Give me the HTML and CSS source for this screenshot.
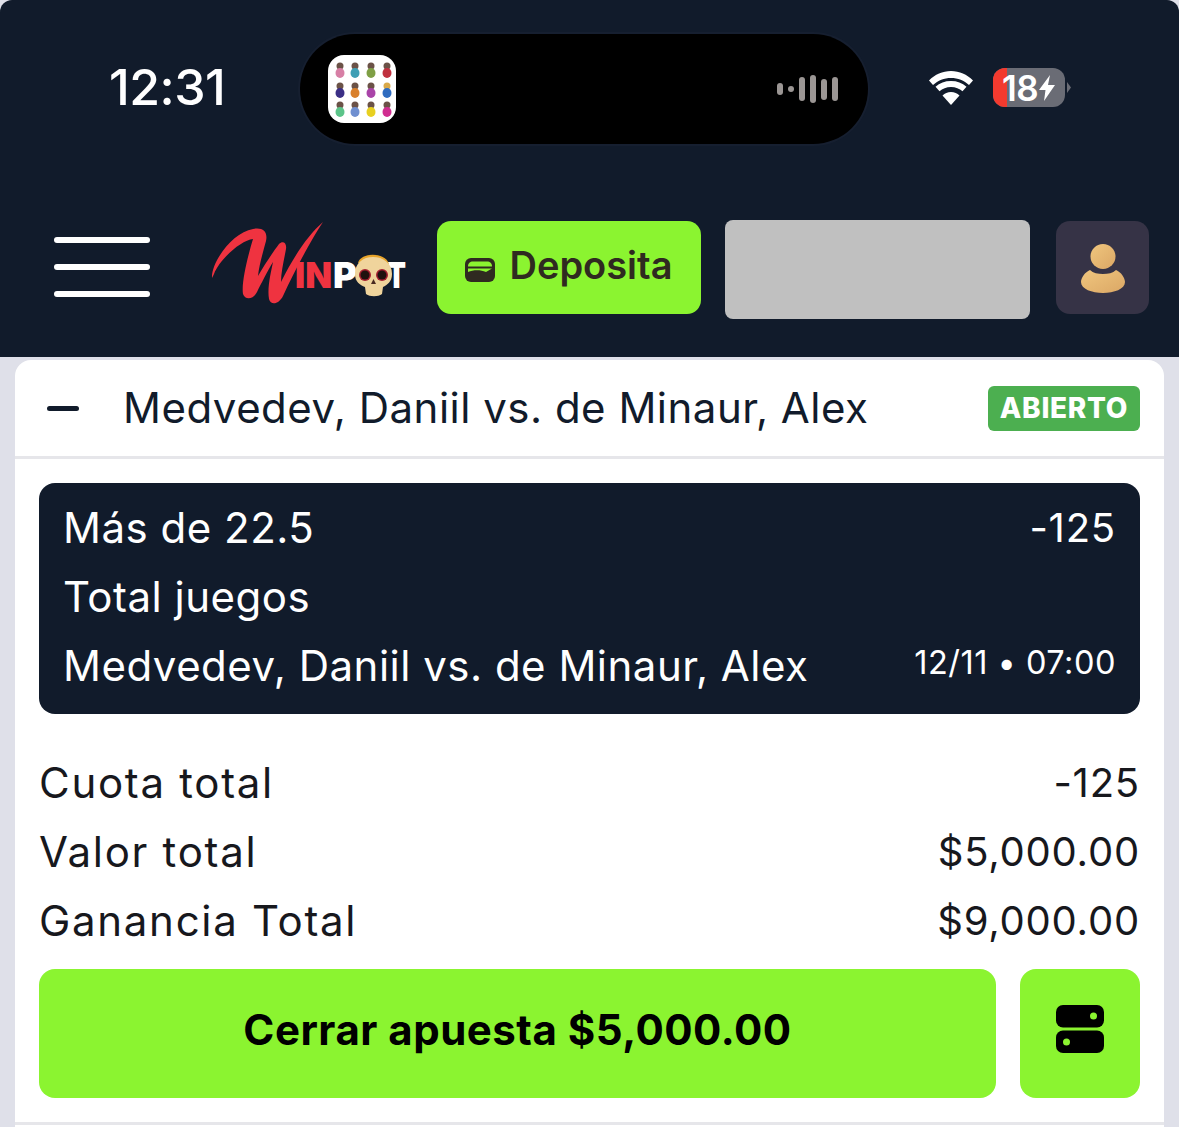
FILE: index.html
```html
<!DOCTYPE html>
<html lang="es">
<head>
  <meta charset="UTF-8">
  <meta name="viewport" content="width=device-width, initial-scale=1">
  <title>Winpot | Mis apuestas</title>
  <link rel="stylesheet" href="styles.css">
</head>

<body>

<div class="top">
  <!-- iOS status bar -->
  <div class="status">
    <span class="time">12:31</span>
    <div class="island">
      <svg class="app-icon" viewBox="0 0 68 68">
        <rect width="68" height="68" rx="16" fill="#fff"/>
        <g fill="#6b5247">
          <circle cx="12" cy="11" r="3.500"/><circle cx="27" cy="11" r="3.500"/><circle cx="43" cy="11" r="3.500"/><circle cx="59" cy="11" r="3.500"/>
          <circle cx="12" cy="31" r="3.500"/><circle cx="27" cy="31" r="3.500"/><circle cx="43" cy="31" r="3.500"/><circle cx="59" cy="31" r="3.500" fill="#d9a94a"/>
          <circle cx="12" cy="50" r="3.500"/><circle cx="27" cy="50" r="3.500"/><circle cx="43" cy="50" r="3.500"/><circle cx="59" cy="50" r="3.500"/>
        </g>
        <ellipse cx="12" cy="18" rx="4.500" ry="5" fill="#d77fa5"/><ellipse cx="27" cy="18" rx="4.500" ry="5" fill="#3f9fb5"/><ellipse cx="43" cy="18" rx="4.500" ry="5" fill="#7f9f45"/><ellipse cx="59" cy="18" rx="4.500" ry="5" fill="#c0313f"/>
        <ellipse cx="12" cy="38" rx="4.500" ry="5" fill="#3b2f86"/><ellipse cx="27" cy="38" rx="4.500" ry="5" fill="#d9802c"/><ellipse cx="43" cy="38" rx="4.500" ry="5" fill="#a944a8"/><ellipse cx="59" cy="38" rx="4.500" ry="5" fill="#2f6cc0"/>
        <ellipse cx="12" cy="57" rx="4.500" ry="5" fill="#5cc489"/><ellipse cx="27" cy="57" rx="4.500" ry="5" fill="#6f8fd0"/><ellipse cx="43" cy="57" rx="4.500" ry="5" fill="#e8d020"/><ellipse cx="59" cy="57" rx="4.500" ry="5" fill="#d02d90"/>
      </svg>
      <div class="wave">
        <i class="h12"></i><i class="h6"></i><i class="h24"></i><i class="h28"></i><i class="h21"></i><i class="h24"></i>
      </div>
    </div>
    <svg class="wifi" viewBox="0 0 48 36">
      <path d="M24 8c7 0 13 2.600 18 7l4-4.500C40 4.500 32.500 1 24 1S8 4.500 2 10.500L6 15c5-4.400 11-7 18-7z" fill="#fff"/>
      <path d="M24 17c4.600 0 8.500 1.600 11.500 4.300l4-4.500C35.300 13 30 11 24 11s-11.300 2-15.500 5.800l4 4.500C15.500 18.600 19.400 17 24 17z" fill="#fff"/>
      <path d="M24 35l8.500-9.500C30.300 23.500 27.300 22 24 22s-6.300 1.500-8.500 3.500z" fill="#fff"/>
    </svg>
    <div class="battery">
      <div class="battery-level"></div>
      <span class="battery-num">18</span>
      <svg class="bolt" viewBox="0 0 16 26"><path d="M11 0L0 15h6.500L5 26 16 10H9z" fill="#fff"/></svg>
    </div>
    <span class="battery-nub"></span>
  </div>

  <!-- Site header -->
  <div class="nav">
    <div class="burger"><span></span><span></span><span></span></div>
    <svg class="logo" viewBox="0 0 196 84">
      <path d="M1 56C0 40 22 10 42 7C52 5 57 10 55 19C52 30 48 44 47 54C54 42 62 30 68 22C72 18 76 21 75 27C73 38 70 50 70 60C82 36 96 14 112 0C100 18 84 48 72 74C68 82 60 84 58 77C56 66 60 50 62 40C56 50 50 62 46 70C42 78 34 78 32 72C30 60 38 30 42 17C30 18 8 38 3 52Z" fill="#ef3340"/>
      <text class="logo-text" x="84" y="66" textLength="37" lengthAdjust="spacingAndGlyphs" fill="#ef3340">IN</text>
      <text class="logo-text" x="122" y="66" textLength="24" lengthAdjust="spacingAndGlyphs" fill="#fff">P</text>
      <text class="logo-text" x="176" y="66" textLength="19" lengthAdjust="spacingAndGlyphs" fill="#fff">T</text>
      <path d="M147 41C150 30 174 30 178 42Z" fill="#e8a52c"/>
      <path d="M144 52C144 41 152 35 162 35C172 35 181 41 181 52C181 60 176 63 172 65L171 72C167 75 159 75 155 72L154 65C149 63 144 60 144 52Z" fill="#f0d49c"/>
      <circle cx="154" cy="53" r="6" fill="#a52030"/><circle cx="171" cy="53" r="6" fill="#a52030"/>
      <circle cx="154" cy="53" r="4.500" fill="#20120f"/><circle cx="171" cy="53" r="4.500" fill="#20120f"/>
      <path d="M162.500 57l-2.500 5h5z" fill="#4a2a20"/>
    </svg>
    <button class="deposit">
      <svg class="wallet" viewBox="0 0 30 24">
        <rect width="30" height="24" rx="6" fill="#2f2a20"/>
        <path d="M3 8.500C3 5 5 3.500 8 3.500h14c3 0 5 1.500 5 5z" fill="#8bf430"/>
        <path d="M3 10.500h24l-6 3.500C15 11.500 8 12 3 14z" fill="#8bf430"/>
      </svg>
      Deposita
    </button>
    <div class="balance"></div>
    <div class="user">
      <svg viewBox="0 0 44 50">
        <defs>
          <linearGradient id="gold" x1="0" y1="0" x2="1" y2="1">
            <stop offset="0" stop-color="#f0c67e"/>
            <stop offset="1" stop-color="#dba765"/>
          </linearGradient>
        </defs>
        <circle cx="22" cy="12.500" r="12.500" fill="url(#gold)"/>
        <path d="M9 26C12 29 17 30 22 30S32 29 35 26C40 28 44 34 44 38C44 45 33 49 22 49S0 45 0 38C0 34 4 28 9 26Z" fill="url(#gold)"/>
      </svg>
    </div>
  </div>
</div>

<div class="card">
  <div class="card-head">
    <span class="minus"></span>
    <span class="match">Medvedev, Daniil vs. de Minaur, Alex</span>
    <span class="badge">ABIERTO</span>
  </div>

  <div class="card-body">
    <div class="selection">
      <div class="row"><span>Más de 22.5</span><span class="val">-125</span></div>
      <div class="row"><span>Total juegos</span></div>
      <div class="row"><span>Medvedev, Daniil vs. de Minaur, Alex</span><span class="date">12/11 • 07:00</span></div>
    </div>

    <div class="summary">
      <div class="row"><span class="label">Cuota total</span><span class="val">-125</span></div>
      <div class="row"><span class="label">Valor total</span><span class="val">$5,000.00</span></div>
      <div class="row"><span class="label">Ganancia Total</span><span class="val">$9,000.00</span></div>
    </div>

    <div class="actions">
      <button class="cashout">Cerrar apuesta $5,000.00</button>
      <button class="toggle">
        <svg viewBox="0 0 48 48">
          <rect width="48" height="22.500" rx="7" fill="#000"/>
          <rect y="25.500" width="48" height="22.500" rx="7" fill="#000"/>
          <circle cx="37.500" cy="11" r="3.500" fill="#8bf430"/>
          <circle cx="10.500" cy="37" r="3.500" fill="#8bf430"/>
        </svg>
      </button>
    </div>
  </div>
</div>

</body>
</html>
```

FILE: styles.css
```css
html {
  background: #fff;
}
body {
  font-family: 'Inter', 'Noto Sans', sans-serif;
  margin: 0;
  padding: 0;
  height: 1127px;
  overflow: hidden;
  background: #dfe0e9;
  color: #111b2b;
}
button {
  font-family: inherit;
  border: none;
  cursor: pointer;
}

/* top dark area */
.top {
  background: #111b2b;
  height: 357px;
  border-radius: 12px 12px 0 0;
}
.status {
  display: flex;
  align-items: center;
  height: 110px;
  padding-top: 34px;
}
.time {
  width: 116px;
  margin-left: 109px;
  margin-right: 75px;
  margin-top: -4px;
  color: #fff;
  font-size: 50px;
  font-weight: 500;
  letter-spacing: -0.5px;
  white-space: nowrap;
}
.island {
  display: flex;
  align-items: center;
  justify-content: space-between;
  box-sizing: border-box;
  width: 568px;
  height: 110px;
  padding: 0 30px 0 28px;
  background: #000;
  border-radius: 55px;
  box-shadow: 0 0 0 2px #161f30;
}
.app-icon {
  width: 68px;
  height: 68px;
}
.wave {
  display: flex;
  align-items: center;
  gap: 5px;
}
.wave i {
  display: block;
  width: 6px;
  border-radius: 3px;
  background: #9b9694;
}
.h6 { height: 6px; }
.h12 { height: 12px; }
.h21 { height: 21px; }
.h24 { height: 24px; }
.h28 { height: 28px; }
.wifi {
  width: 48px;
  height: 36px;
  margin-left: 59px;
  margin-top: -3px;
}
.battery {
  position: relative;
  display: flex;
  align-items: center;
  box-sizing: border-box;
  width: 72px;
  height: 39px;
  margin-left: 18px;
  margin-top: -3px;
  padding-left: 9px;
  overflow: hidden;
  border-radius: 12px;
  background: #6a6c75;
}
.battery-level {
  position: absolute;
  left: 0;
  top: 0;
  bottom: 0;
  width: 14px;
  background: #f33a2f;
}
.battery-num {
  position: relative;
  color: #fff;
  font-size: 35px;
  font-weight: 600;
  letter-spacing: -0.5px;
}
.bolt {
  position: relative;
  width: 16px;
  height: 26px;
  margin-left: 1px;
}
.battery-nub {
  width: 4px;
  height: 11px;
  margin-left: 2px;
  margin-top: -3px;
  background: #6a6c75;
  clip-path: polygon(0 0, 100% 50%, 0 100%);
}

/* site header */
.nav {
  display: flex;
  align-items: center;
  height: 93px;
  margin-top: 77px;
}
.burger {
  display: flex;
  flex-direction: column;
  gap: 21px;
  width: 96px;
  margin-left: 54px;
  margin-top: -1px;
}
.burger span {
  display: block;
  height: 6px;
  border-radius: 3px;
  background: #fff;
}
.logo {
  width: 196px;
  height: 84px;
  margin-left: 61px;
  margin-right: 30px;
  margin-top: -7px;
  overflow: visible;
}
.logo-text {
  font-family: 'Inter', sans-serif;
  font-size: 36px;
  font-weight: 900;
}
.deposit {
  display: flex;
  align-items: center;
  justify-content: center;
  gap: 14px;
  width: 264px;
  height: 93px;
  padding: 0 0 5px;
  border-radius: 14px;
  background: #8bf430;
  color: #2f2a20;
  font-size: 38px;
  font-weight: 600;
}
.wallet {
  width: 30px;
  height: 24px;
  margin-top: 10px;
}
.balance {
  width: 305px;
  height: 99px;
  margin: 3px 26px 0 24px;
  border-radius: 8px;
  background: #c0c0c0;
}
.user {
  display: flex;
  align-items: center;
  justify-content: center;
  width: 93px;
  height: 93px;
  border-radius: 14px;
  background: #363346;
}
.user svg {
  width: 44px;
  height: 50px;
  margin-top: 2px;
}

/* bet card */
.card {
  margin: 3px 15px 0;
  background: #fff;
  border-radius: 16px 16px 0 0;
  height: 767px;
}
.card-head {
  display: flex;
  align-items: center;
  height: 96px;
  padding: 0 24px 0 32px;
  border-bottom: 3px solid #e6e6ea;
}
.minus {
  width: 32px;
  height: 5px;
  border-radius: 3px;
  background: #111b2b;
  margin-right: 44px;
}
.match {
  flex: 1;
  padding-bottom: 2px;
  font-size: 42px;
  letter-spacing: 0.5px;
  white-space: nowrap;
}
.badge {
  width: 152px;
  height: 45px;
  border-radius: 6px;
  background: #4caf50;
  color: #fff;
  font-size: 28px;
  font-weight: 800;
  letter-spacing: 0.7px;
  line-height: 45px;
  text-align: center;
}
.card-body {
  padding: 24px 24px 24px;
  border-bottom: 3px solid #e6e6ea;
}
.row {
  display: flex;
  justify-content: space-between;
  align-items: center;
  box-sizing: border-box;
  height: 69px;
  padding-bottom: 2px;
  font-size: 42px;
  letter-spacing: 0.5px;
  white-space: nowrap;
}
.val {
  font-size: 40px;
  letter-spacing: 0.8px;
}
.label {
  letter-spacing: 1.7px;
}
.selection {
  box-sizing: border-box;
  height: 231px;
  padding: 11px 24px 13px 24px;
  border-radius: 16px;
  background: #111b2b;
  color: #fff;
}
.date {
  font-size: 32.5px;
  margin-top: -7px;
}
.summary {
  margin-top: 35px;
  color: #17181d;
}
.actions {
  display: flex;
  gap: 24px;
  margin-top: 13px;
}
.cashout {
  flex: 1;
  height: 129px;
  padding: 0 0 9px;
  border-radius: 16px;
  background: #8bf430;
  color: #000;
  font-size: 42px;
  font-weight: 700;
  letter-spacing: 0.5px;
}
.toggle {
  display: flex;
  align-items: center;
  justify-content: center;
  width: 120px;
  height: 129px;
  padding: 0 0 9px;
  border-radius: 16px;
  background: #8bf430;
}
.toggle svg {
  width: 48px;
  height: 48px;
}
```
